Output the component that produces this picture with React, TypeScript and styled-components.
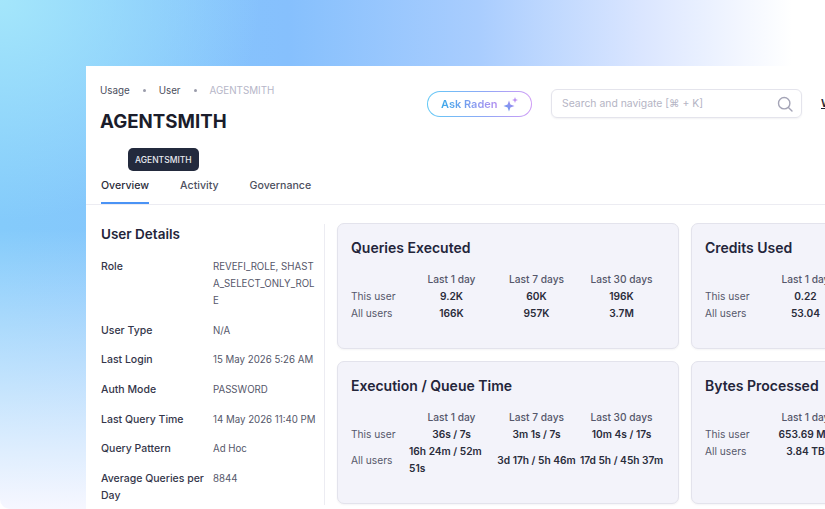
import styled, { createGlobalStyle } from 'styled-components'

const GlobalStyle = createGlobalStyle`
  html, body {
    margin: 0;
    padding: 0;
    height: 100%;
    overflow: hidden;
    background: #fff;
  }
  * { box-sizing: border-box; }
`

const Backdrop = styled.div`
  width: 825px;
  height: 509px;
  overflow: hidden;
  padding: 66px 0 0 86px;
  border-radius: 0 0 0 10px;
  font-family: Inter, 'Liberation Sans', sans-serif;
  color: #1d2030;
  background:
    radial-gradient(ellipse 260px 220px at 0px 0px, #a4e6fb 0%, rgba(164, 230, 251, 0) 100%),
    linear-gradient(180deg, rgba(255, 255, 255, 0) 0%, rgba(255, 255, 255, 0) 45%, #f6f7ff 100%),
    linear-gradient(90deg, #84cbfb 0%, #86c0fd 35%, #a9cdfe 58%, #dbe6ff 78%, #ffffff 96%);
`

const Panel = styled.div`
  position: relative;
  width: 739px;
  height: 443px;
  background: #fff;
  overflow: hidden;
`

const Header = styled.header`
  display: flex;
  height: 82px;
  padding: 18px 0 0 14px;
`

const HeaderLeft = styled.div`
  flex: none;
  width: 327px;
`

const Crumbs = styled.nav`
  display: flex;
  align-items: center;
  gap: 13px;
  height: 13px;
  font-size: 9.8px;
  color: #4a4d5c;
`

const Crumb = styled.span<{ $current?: boolean }>`
  color: ${(p) => (p.$current ? '#b6b6c8' : '#4a4d5c')};
`

const Dot = styled.span`
  width: 3px;
  height: 3px;
  border-radius: 50%;
  background: #9a9cab;
`

const Title = styled.h1`
  margin: 13px 0 0;
  font-size: 18.7px;
  line-height: 24px;
  font-weight: 700;
  color: #1b1d2b;
`

const Actions = styled.div`
  display: flex;
  flex: none;
  align-items: flex-start;
  padding-top: 5px;
`

const AskButton = styled.button`
  display: flex;
  align-items: center;
  gap: 4px;
  width: 105px;
  height: 26px;
  margin: 2px 19px 0 0;
  padding: 0 0 0 13px;
  border: 1px solid transparent;
  border-radius: 13px;
  background:
    linear-gradient(#fff, #fff) padding-box,
    linear-gradient(90deg, #62c9f6, #8fa8f6 55%, #cf9cf6) border-box;
  font-family: inherit;
  font-size: 11px;
  font-weight: 600;
`

const AskLabel = styled.span`
  background: linear-gradient(90deg, #3ba9ea, #8a9bf0 60%, #b28cf0);
  -webkit-background-clip: text;
  background-clip: text;
  color: transparent;
`

const SearchBox = styled.div`
  display: flex;
  align-items: center;
  justify-content: space-between;
  flex: none;
  width: 251px;
  height: 29px;
  padding: 0 8px 0 10px;
  border: 1px solid #e4e4ec;
  border-radius: 6px;
  box-shadow: 0 1px 2px rgba(30, 30, 70, 0.06);
  font-size: 10.4px;
  color: #b4b4c4;
`

const UserInitial = styled.span`
  margin: 7px 0 0 19px;
  font-size: 11px;
  font-weight: 600;
  text-decoration: underline;
  color: #1d2030;
`

const Tooltip = styled.div`
  position: absolute;
  left: 42px;
  top: 82px;
  height: 23px;
  padding: 0 7px;
  display: flex;
  align-items: center;
  border-radius: 5px;
  background: #232a3d;
  color: #e8e9f0;
  font-size: 8.5px;
  font-weight: 500;
`

const Tabs = styled.div`
  display: flex;
  gap: 31px;
  height: 57px;
  padding: 30px 0 0 15px;
  border-bottom: 1px solid #ececf2;
`

const Tab = styled.div<{ $active?: boolean }>`
  height: 26px;
  padding-top: 1px;
  font-size: 10.6px;
  line-height: 14px;
  font-weight: 500;
  color: ${(p) => (p.$active ? '#2a2c3a' : '#4d4f5e')};
  border-bottom: 2px solid ${(p) => (p.$active ? '#4a93f5' : 'transparent')};
`

const Body = styled.div`
  display: flex;
  align-items: flex-start;
`

const Sidebar = styled.aside`
  flex: none;
  width: 239px;
  height: 281px;
  margin-top: 19px;
  padding-left: 15px;
  border-right: 1px solid #ececf2;
`

const SideTitle = styled.h2`
  margin: 0 0 14px;
  font-size: 13.5px;
  line-height: 20px;
  font-weight: 600;
  color: #23253a;
`

const DetailRow = styled.div`
  display: grid;
  grid-template-columns: 112px 105px;
  margin-bottom: 12.7px;
  font-size: 10.5px;
  line-height: 17px;
`

const DetailLabel = styled.div`
  font-weight: 500;
  color: #34364a;
`

const DetailValue = styled.div`
  font-size: 9.7px;
  color: #55576a;
  white-space: pre-line;
`

const Cards = styled.div`
  flex: none;
  display: grid;
  grid-template-columns: 342px 342px;
  gap: 12px;
  padding: 18px 0 0 12px;
`

const Card = styled.section<{ $tall?: boolean }>`
  height: ${(p) => (p.$tall ? '143px' : '126px')};
  padding: 14px 13px 0;
  border: 1px solid #e3e3ec;
  border-radius: 7px;
  background: #f3f3fa;
  box-shadow: 0 1px 2px rgba(30, 30, 70, 0.05);
`

const CardTitle = styled.h3`
  margin: 0 0 13px;
  font-size: 14px;
  line-height: 20px;
  font-weight: 600;
  color: #23253a;
`

const StatGrid = styled.div`
  display: grid;
  grid-template-columns: 58px repeat(3, 85px);
  align-items: center;
  font-size: 10.2px;
  line-height: 17px;
`

const RowLabel = styled.div`
  color: #55576a;
`

const ColHead = styled.div`
  display: flex;
  justify-content: center;
  font-weight: 500;
  color: #55576a;
`

const Stat = styled.div`
  display: flex;
  justify-content: center;
  font-weight: 600;
  color: #2a2c3a;
`

const Sparkle = () => (
  <svg width="17" height="17" viewBox="0 0 17 17">
    <defs>
      <linearGradient id="spark" x1="0" y1="1" x2="1" y2="0">
        <stop offset="0" stopColor="#5a9bf0" />
        <stop offset="1" stopColor="#b48cf0" />
      </linearGradient>
    </defs>
    <path
      d="M7 4.5 8.4 8.6 12.5 10 8.4 11.4 7 15.5 5.6 11.4 1.5 10 5.6 8.6Z"
      fill="url(#spark)"
    />
    <path d="M13 1 13.8 3.2 16 4 13.8 4.8 13 7 12.2 4.8 10 4 12.2 3.2Z" fill="#b98df2" />
  </svg>
)

const SearchIcon = () => (
  <svg width="16" height="16" viewBox="0 0 16 16" fill="none" stroke="#a4a4b6" strokeWidth="1.4">
    <circle cx="7.2" cy="7.2" r="5.7" />
    <path d="M11.4 11.4 15 15" strokeLinecap="round" />
  </svg>
)

const details: [string, string][] = [
  ['Role', 'REVEFI_ROLE, SHAST\nA_SELECT_ONLY_ROL\nE'],
  ['User Type', 'N/A'],
  ['Last Login', '15 May 2026 5:26 AM'],
  ['Auth Mode', 'PASSWORD'],
  ['Last Query Time', '14 May 2026 11:40 PM'],
  ['Query Pattern', 'Ad Hoc'],
  ['Average Queries per Day', '8844'],
]

type CardData = { title: string; tall?: boolean; user: string[]; all: string[] }

const cards: CardData[] = [
  { title: 'Queries Executed', user: ['9.2K', '60K', '196K'], all: ['166K', '957K', '3.7M'] },
  { title: 'Credits Used', user: ['0.22', '', ''], all: ['53.04', '', ''] },
  {
    title: 'Execution / Queue Time',
    tall: true,
    user: ['36s / 7s', '3m 1s / 7s', '10m 4s / 17s'],
    all: ['16h 24m / 52m 51s', '3d 17h / 5h 46m', '17d 5h / 45h 37m'],
  },
  {
    title: 'Bytes Processed',
    tall: true,
    user: ['653.69 MB', '', ''],
    all: ['3.84 TB', '', ''],
  },
]

export default function App() {
  return (
    <Backdrop>
      <GlobalStyle />
      <Panel>
        <Header>
          <HeaderLeft>
            <Crumbs>
              <Crumb>Usage</Crumb>
              <Dot />
              <Crumb>User</Crumb>
              <Dot />
              <Crumb $current>AGENTSMITH</Crumb>
            </Crumbs>
            <Title>AGENTSMITH</Title>
          </HeaderLeft>
          <Actions>
            <AskButton>
              <AskLabel>Ask Raden</AskLabel>
              <Sparkle />
            </AskButton>
            <SearchBox>
              Search and navigate [⌘ + K]
              <SearchIcon />
            </SearchBox>
            <UserInitial>W</UserInitial>
          </Actions>
        </Header>
        <Tooltip>AGENTSMITH</Tooltip>
        <Tabs>
          <Tab $active>Overview</Tab>
          <Tab>Activity</Tab>
          <Tab>Governance</Tab>
        </Tabs>
        <Body>
          <Sidebar>
            <SideTitle>User Details</SideTitle>
            {details.map(([label, value]) => (
              <DetailRow key={label}>
                <DetailLabel>{label}</DetailLabel>
                <DetailValue>{value}</DetailValue>
              </DetailRow>
            ))}
          </Sidebar>
          <Cards>
            {cards.map((card) => (
              <Card key={card.title} $tall={card.tall}>
                <CardTitle>{card.title}</CardTitle>
                <StatGrid>
                  <div />
                  <ColHead>Last 1 day</ColHead>
                  <ColHead>Last 7 days</ColHead>
                  <ColHead>Last 30 days</ColHead>
                  <RowLabel>This user</RowLabel>
                  {card.user.map((v, i) => (
                    <Stat key={i}>
                      <span>{v}</span>
                    </Stat>
                  ))}
                  <RowLabel>All users</RowLabel>
                  {card.all.map((v, i) => (
                    <Stat key={i}>
                      <span>{v}</span>
                    </Stat>
                  ))}
                </StatGrid>
              </Card>
            ))}
          </Cards>
        </Body>
      </Panel>
    </Backdrop>
  )
}
